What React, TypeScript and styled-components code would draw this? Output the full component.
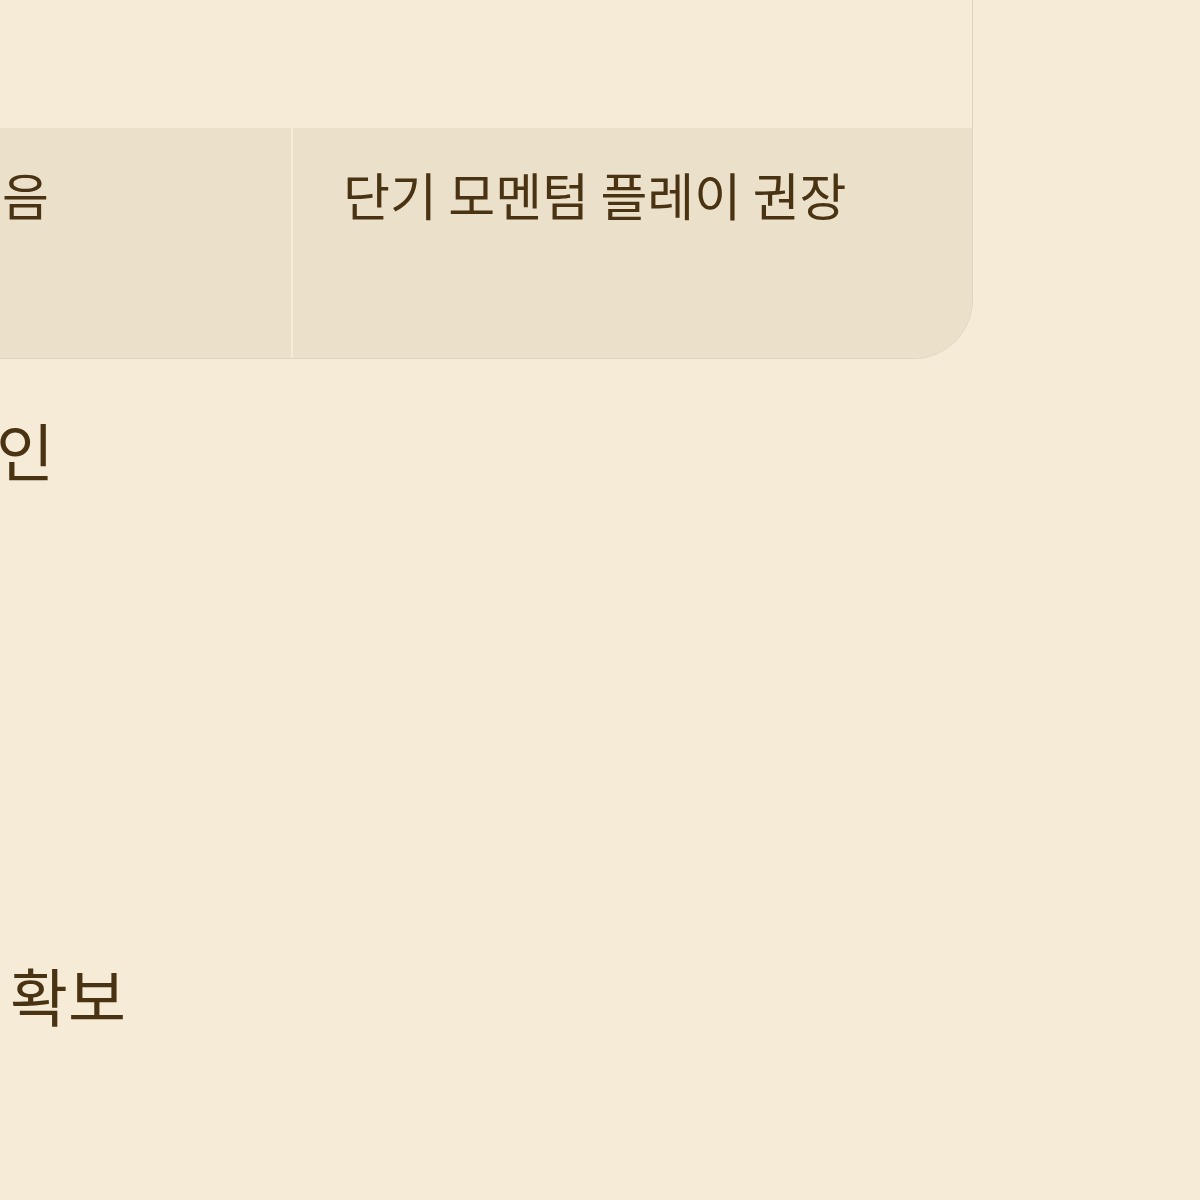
import React from 'react';
import styled, { createGlobalStyle } from 'styled-components';

const color = {
  page: '#f5ebd7',
  rowAlt: '#ebe0ca',
  border: '#e0d4bd',
  text: '#4a3312',
};

const rows = [
  { left: '모멘텀 약화 가능', right: '보수적 접근 필요', alt: false },
  { left: '변동성이 높음', right: '단기 모멘텀 플레이 권장', alt: true },
];

const notes = ['지지선 확인', '분할 매수', '손절 설정', '익절 분할', '관망 유지', '현금 비중 확보'];

export default function App() {
  return (
    <>
      <GlobalStyle />
      <Page>
        <Content>
          <TableCard>
            {rows.map(({ left, right, alt }) => (
              <Row key={left} alt={alt}>
                <Cell>{left}</Cell>
                <Cell divided>{right}</Cell>
              </Row>
            ))}
          </TableCard>
          <NoteList>
            {notes.map(note => (
              <Note key={note}>{note}</Note>
            ))}
          </NoteList>
        </Content>
      </Page>
    </>
  );
}

const GlobalStyle = createGlobalStyle`
  html, body {
    margin: 0;
    padding: 0;
    background: ${color.page};
    overflow: hidden;
  }
`;

const Page = styled.div`
  width: 1200px;
  height: 1200px;
  overflow: hidden;
  background: ${color.page};
  font-family: 'Noto Sans CJK KR', 'Noto Sans', sans-serif;
  color: ${color.text};
`;

const Content = styled.div`
  margin: -101px 0 0 -295px;
  width: 1268px;
`;

const TableCard = styled.div`
  border: 1px solid ${color.border};
  border-top: none;
  border-radius: 0 0 60px 0;
  overflow: hidden;
`;

const Row = styled.div<{ alt: boolean }>`
  display: grid;
  grid-template-columns: 586px 1fr;
  min-height: 229px;
  background: ${p => (p.alt ? color.rowAlt : color.page)};
  & + & {
    min-height: 230px;
  }
`;

const Cell = styled.div<{ divided?: boolean }>`
  box-sizing: border-box;
  padding: 26px 50px;
  font-size: 51px;
  line-height: 1.6;
  white-space: nowrap;
  border-left: ${p => (p.divided ? `2px solid ${color.page}` : 'none')};
  margin-left: ${p => (p.divided ? '-1px' : '0')};
`;

const NoteList = styled.div`
  display: flex;
  flex-direction: column;
  gap: 14.5px;
  margin-top: 43px;
  padding-left: 45px;
`;

const Note = styled.div`
  font-size: 63px;
  line-height: 1.5;
  white-space: nowrap;
`;
